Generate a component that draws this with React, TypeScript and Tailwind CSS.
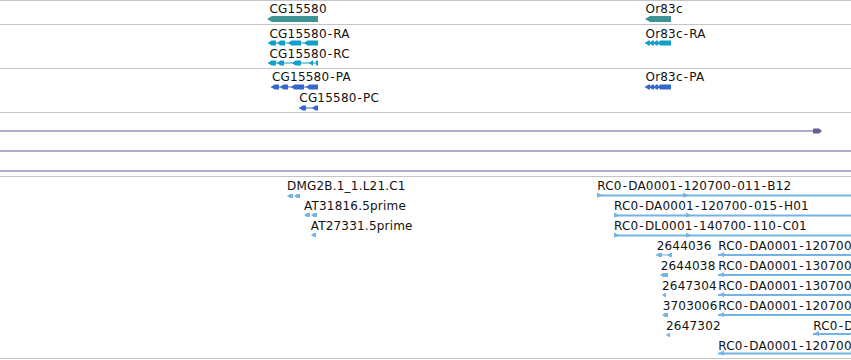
import React from 'react';

// Genome browser view: stacked tracks, features placed by their coordinate.

interface Label {
    text: string;
    x: number;
    y: number; // cap top, page coords
}

interface TrackProps {
    top: number;
    height: string;
    rows: number;
    labels: Label[];
    children?: React.ReactNode;
}

const GRAY = '#c4c4c4';
const TEAL = '#3e9494';
const CYAN = '#10a0c8';
const BLUE = '#3468cc';
const PURPLE = '#6b5b9b';
const SKY = '#74b4e2';

const Text: React.FC<{ text: string }> = ({ text }) => {
    const parts = text.split('-');
    return (
        <>
            {parts.map((p, i) => (
                <React.Fragment key={i}>
                    {i > 0 && <span className="mx-px">-</span>}
                    {p}
                </React.Fragment>
            ))}
        </>
    );
};

const Track: React.FC<TrackProps> = ({ top, height, rows, labels, children }) => {
    return (
        <div className={`relative border-b border-[#c4c4c4] ${height}`}>
            <svg
                className="absolute left-0 top-0"
                width={851}
                height={rows}
                viewBox={`0 ${top} 851 ${rows}`}
            >
                {children}
            </svg>
            {labels.map((l, i) => (
                <span
                    key={i}
                    className="absolute whitespace-nowrap tracking-[0.2px]"
                    style={{ left: l.x, top: l.y - 2.4 - top }}
                >
                    <Text text={l.text} />
                </span>
            ))}
        </div>
    );
};

// exon pointing left
const larrow = (x0: number, x1: number, cy: number, h = 5) => {
    const t = h / 2;
    return `${x0},${cy} ${x0 + t + 1},${cy - t} ${x1},${cy - t} ${x1},${cy + t} ${x0 + t + 1},${cy + t}`;
};

const Transcript: React.FC<{
    from: number;
    to: number;
    cy: number;
    exons: [number, number][];
    color: string;
}> = ({ from, to, cy, exons, color }) => (
    <g fill={color}>
        <rect x={from} y={cy - 0.5} width={to - from} height={1} />
        {exons.map(([a, b], i) => (
            <polygon key={i} points={larrow(a, b, cy)} />
        ))}
    </g>
);

const SkyLine: React.FC<{ from: number; cy: number; marks: number[]; dir: 'l' | 'r' }> = ({
    from,
    cy,
    marks,
    dir,
}) => (
    <g fill={SKY}>
        <rect x={from} y={cy - 1} width={851 - from} height={2} />
        {marks.map((m, i) =>
            dir === 'r' ? (
                <polygon key={i} points={`${m},${cy - 3} ${m + 6},${cy} ${m},${cy + 2}`} />
            ) : (
                <polygon key={i} points={`${m},${cy} ${m + 6},${cy - 3} ${m + 6},${cy + 2}`} />
            )
        )}
    </g>
);

const SkyBits: React.FC<{ cy: number; exons: [number, number][]; line?: [number, number] }> = ({
    cy,
    exons,
    line,
}) => (
    <g fill={SKY}>
        {line && <rect x={line[0]} y={cy - 0.5} width={line[1] - line[0]} height={1} />}
        {exons.map(([a, b], i) => (
            <polygon key={i} points={larrow(a, b, cy, 4)} />
        ))}
    </g>
);

const App: React.FC = () => {
    return (
        <div className="w-[851px] h-[360px] overflow-hidden bg-white font-['DejaVu_Sans',sans-serif] text-[12px] leading-[14px] text-[#111]">
            <div className="h-px bg-[#c4c4c4]" />

            {/* Genes */}
            <Track
                top={1}
                height="h-[24px]"
                rows={23}
                labels={[
                    { text: 'CG15580', x: 269.5, y: 4 },
                    { text: 'Or83c', x: 645.5, y: 4 },
                ]}
            >
                <polygon points="267,19 272,16 318,16 318,22 272,22" fill={TEAL} />
                <polygon points="645,19 650,16 671,16 671,22 650,22" fill={TEAL} />
            </Track>

            {/* Transcripts */}
            <Track
                top={25}
                height="h-[44px]"
                rows={43}
                labels={[
                    { text: 'CG15580-RA', x: 269.5, y: 29.3 },
                    { text: 'CG15580-RC', x: 269.5, y: 49.3 },
                    { text: 'Or83c-RA', x: 645.5, y: 29.3 },
                ]}
            >
                <Transcript
                    from={268}
                    to={318}
                    cy={43}
                    color={CYAN}
                    exons={[
                        [268, 276],
                        [277, 285],
                        [288, 301],
                        [304, 318],
                    ]}
                />
                <Transcript
                    from={268}
                    to={318}
                    cy={63}
                    color={CYAN}
                    exons={[
                        [268, 276],
                        [277, 284],
                        [292, 301],
                        [309, 313],
                    ]}
                />
                <rect x={316} y={60.5} width={2} height={5} fill={CYAN} />
                <Transcript
                    from={645}
                    to={671}
                    cy={43}
                    color={CYAN}
                    exons={[
                        [645, 650],
                        [649, 654],
                        [653, 658],
                        [657, 671],
                    ]}
                />
            </Track>

            {/* Proteins */}
            <Track
                top={69}
                height="h-[44px]"
                rows={43}
                labels={[
                    { text: 'CG15580-PA', x: 272, y: 72.7 },
                    { text: 'CG15580-PC', x: 299.3, y: 93.3 },
                    { text: 'Or83c-PA', x: 645.5, y: 72.7 },
                ]}
            >
                <Transcript
                    from={271}
                    to={318}
                    cy={87}
                    color={BLUE}
                    exons={[
                        [271, 279],
                        [280, 288],
                        [291, 304],
                        [306, 318],
                    ]}
                />
                <Transcript
                    from={299}
                    to={318}
                    cy={108}
                    color={BLUE}
                    exons={[
                        [299, 306],
                        [312, 318],
                    ]}
                />
                <Transcript
                    from={645}
                    to={671}
                    cy={87}
                    color={BLUE}
                    exons={[
                        [645, 650],
                        [649, 654],
                        [653, 658],
                        [657, 671],
                    ]}
                />
            </Track>

            {/* Long features */}
            <Track top={113} height="h-[64px]" rows={63} labels={[]}>
                <g fill={PURPLE}>
                    <rect x={0} y={130.5} width={815} height={1} />
                    <polygon points="813,128.5 819,128.5 822,131 819,133.5 813,133.5" />
                    <rect x={0} y={150.5} width={851} height={1} />
                    <rect x={0} y={170.5} width={851} height={1} />
                </g>
            </Track>

            {/* ESTs */}
            <Track
                top={177}
                height="h-[182px]"
                rows={181}
                labels={[
                    { text: 'DMG2B.1_1.L21.C1', x: 287, y: 181.5 },
                    { text: 'AT31816.5prime', x: 304, y: 201.5 },
                    { text: 'AT27331.5prime', x: 310.7, y: 221.5 },
                    { text: 'RC0-DA0001-120700-011-B12', x: 597.3, y: 181.5 },
                    { text: 'RC0-DA0001-120700-015-H01', x: 614, y: 201.5 },
                    { text: 'RC0-DL0001-140700-110-C01', x: 614, y: 221.5 },
                    { text: '2644036', x: 656.7, y: 241.3 },
                    { text: 'RC0-DA0001-120700', x: 718.3, y: 241.3 },
                    { text: '2644038', x: 660.7, y: 261.3 },
                    { text: 'RC0-DA0001-130700', x: 718.3, y: 261.3 },
                    { text: '2647304', x: 662, y: 281.3 },
                    { text: 'RC0-DA0001-130700', x: 718.3, y: 281.3 },
                    { text: '3703006', x: 662.7, y: 301.3 },
                    { text: 'RC0-DA0001-120700', x: 718.3, y: 301.3 },
                    { text: '2647302', x: 666, y: 321.3 },
                    { text: 'RC0-DA0001-120700', x: 813.3, y: 321.3 },
                    { text: 'RC0-DA0001-120700', x: 718.3, y: 341.5 },
                ]}
            >
                <SkyBits cy={196} exons={[[287, 293], [294, 300]]} />
                <SkyBits cy={215} exons={[[304, 310], [311, 317]]} />
                <SkyBits cy={235} exons={[[311, 316]]} />
                <SkyLine from={597} cy={195.5} marks={[597, 683]} dir="r" />
                <SkyLine from={614} cy={215.5} marks={[614, 686]} dir="r" />
                <SkyLine from={614} cy={235.5} marks={[614, 686]} dir="r" />
                <SkyBits cy={255} exons={[[656, 662], [667, 672]]} line={[656, 672]} />
                <SkyLine from={718} cy={255} marks={[718]} dir="l" />
                <SkyBits cy={275} exons={[[660, 668]]} />
                <SkyLine from={718} cy={275} marks={[718]} dir="l" />
                <SkyBits cy={295} exons={[[662, 666]]} />
                <SkyLine from={718} cy={295} marks={[718]} dir="l" />
                <SkyBits cy={315} exons={[[662, 668]]} />
                <SkyLine from={718} cy={315} marks={[718]} dir="l" />
                <SkyBits cy={335} exons={[[666, 670]]} />
                <SkyLine from={813} cy={334} marks={[813]} dir="l" />
                <SkyLine from={718} cy={353.5} marks={[718]} dir="l" />
            </Track>
        </div>
    );
};

export default App;
